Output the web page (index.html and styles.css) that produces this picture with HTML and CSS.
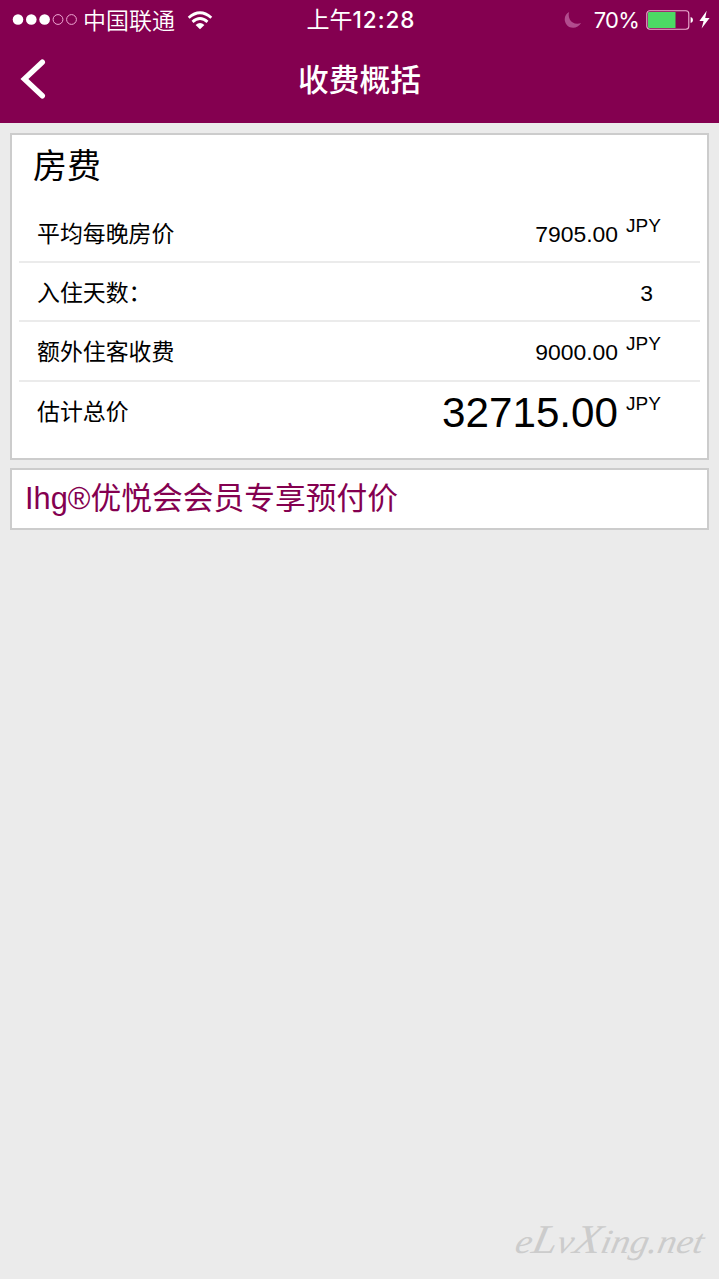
FILE: index.html
```html
<!DOCTYPE html>
<html lang="zh-CN">

<head>
    <meta charset="UTF-8">
    <meta name="viewport" content="width=device-width, initial-scale=1.0">
    <title>收费概括</title>
    <link rel="stylesheet" href="styles.css">
</head>

<body>

    <header class="header">
        <div class="status">
            <div class="status-left">
                <svg class="signal" width="66" height="14" viewBox="0 0 66 14">
                    <g fill="#fff">
                        <circle cx="6" cy="6.5" r="5.3" />
                        <circle cx="19.3" cy="6.5" r="5.3" />
                        <circle cx="32.6" cy="6.5" r="5.3" />
                    </g>
                    <g fill="none" stroke="#f0a8d4" stroke-width="1">
                        <circle cx="46" cy="6.5" r="4.9" />
                        <circle cx="59.5" cy="6.5" r="4.9" />
                    </g>
                </svg>
                <span class="carrier">中国联通</span>
                <svg class="wifi" width="26" height="19" viewBox="0 0 26 19">
                    <g fill="none" stroke="#fff" stroke-width="2.8">
                        <path d="M1.7 6.8 Q13 -3.2 24.3 6.8" />
                        <path d="M5.5 10.9 Q13 4.2 20.5 10.9" />
                    </g>
                    <path d="M8.6 14 Q13 10 17.4 14 L13 18.3 Z" fill="#fff" />
                </svg>
            </div>
            <div class="time">上午<b>12:28</b></div>
            <div class="status-right">
                <svg width="18" height="18" viewBox="0 0 18 18">
                    <path d="M5.2 1 C.8 3.2 -.6 8.8 2.1 12.9 C5.4 18.2 13.6 18.2 17.1 12 C12.4 14 7.6 12 5.7 8.2 C4.5 5.8 4.4 3.3 5.2 1 Z" fill="#b24c8e" />
                </svg>
                <span class="percent">70%</span>
                <svg class="battery" width="48" height="20" viewBox="0 0 48 20">
                    <rect x=".8" y=".8" width="42" height="18.4" rx="3" fill="none" stroke="#eeb0d2" stroke-width="1.1" />
                    <path d="M3 2 H29.5 V18 H3 Q2 18 2 17 V3 Q2 2 3 2 Z" fill="#4cd964" />
                    <path d="M44.6 7 Q47 7.7 47 10 Q47 12.3 44.6 13 Z" fill="#fff" />
                </svg>
                <svg class="bolt" width="11" height="20" viewBox="0 0 11 20">
                    <path d="M7.7 .8 L.4 11 H4.6 L2.6 18.6 L10.6 8 H6.2 Z" fill="#fff" />
                </svg>
            </div>
        </div>
        <nav class="navbar">
            <a class="back" href="#" aria-label="返回">
                <svg width="26" height="42" viewBox="0 0 26 42">
                    <path d="M22.3 4.2 L4.4 21 L22.3 37.8" fill="none" stroke="#fff" stroke-width="5.4" stroke-linecap="round" stroke-linejoin="miter" />
                </svg>
            </a>
            <h1>收费概括</h1>
            <span></span>
        </nav>
    </header>

    <main class="content">
        <section class="card fees">
            <h2>房费</h2>
            <ul>
                <li><span>平均每晚房价</span><span class="price">7905.00</span><span class="unit">JPY</span></li>
                <li><span>入住天数：</span><span class="price nights">3</span></li>
                <li><span>额外住客收费</span><span class="price">9000.00</span><span class="unit">JPY</span></li>
                <li><span>估计总价</span><span class="price total">32715.00</span><span class="unit">JPY</span></li>
            </ul>
        </section>
        <section class="card rate">Ihg®优悦会会员专享预付价</section>
    </main>

    <footer class="watermark">
        <svg width="210" height="70" viewBox="0 0 210 70">
            <text x="14" y="44" textLength="188" lengthAdjust="spacingAndGlyphs" transform="skewX(-12)">e<tspan class="cap">L</tspan>v<tspan class="cap">X</tspan>ing.net</text>
        </svg>
    </footer>

</body>

</html>
```
FILE: styles.css
```css
* {
    box-sizing: border-box;
}

body {
    margin: 0;
    min-height: 1279px;
    display: flex;
    flex-direction: column;
    background: #ebebeb;
    color: #000;
    font-family: "Liberation Sans", "Noto Sans CJK SC", sans-serif;
}

svg {
    display: block;
}

.header {
    height: 123px;
    background: #840050;
    color: #fff;
}

.status {
    display: grid;
    grid-template-columns: 1fr auto 1fr;
    align-items: center;
    height: 39px;
    padding: 0 9px 0 12px;
    line-height: 36px;
    font-size: 23px;
}

.status-left,
.status-right {
    display: flex;
    align-items: center;
}

.status-right {
    justify-content: flex-end;
}

.carrier {
    margin-left: 5px;
    padding-bottom: 3px;
    font-weight: 350;
    font-family: "Noto Sans CJK SC", sans-serif;
}

.wifi {
    margin-left: 12px;
}

.time {
    padding-bottom: 2px;
    font-family: "Noto Sans CJK SC", sans-serif;
}

.time b {
    font-family: Inter, sans-serif;
    font-weight: 500;
    font-size: 22.5px;
    letter-spacing: 1px;
}

.percent {
    margin: 0 7px 0 12px;
    padding-bottom: 1px;
    font-family: Inter, sans-serif;
    font-size: 22px;
    letter-spacing: -0.8px;
}

.bolt {
    margin-left: 5px;
}

.navbar {
    display: grid;
    grid-template-columns: 1fr auto 1fr;
    align-items: center;
    height: 79px;
    padding: 0 20px;
}

.navbar h1 {
    margin: 0;
    padding-top: 4px;
    font-size: 30.7px;
    font-weight: 500;
    line-height: 46px;
}

.content {
    display: flex;
    flex-direction: column;
    gap: 8px;
    padding: 10px 10px 0;
}

.card {
    background: #fff;
    border: 2px solid #ccc;
}

.fees {
    height: 327px;
    padding: 0 7px;
}

.fees h2 {
    margin: 0;
    padding: 6px 0 0 14px;
    height: 68.6px;
    font-size: 34px;
    font-weight: 400;
    line-height: 50px;
}

.fees ul {
    margin: 0;
    padding: 0;
    list-style: none;
}

.fees li {
    display: flex;
    height: 59.4px;
    padding: 0 39px 0 18px;
    border-bottom: 2px solid #ebebeb;
    font-size: 22.9px;
    line-height: 61px;
}

.fees li:last-child {
    border-bottom: 0;
}

.price {
    margin-left: auto;
}

.nights {
    padding-right: 8px;
}

.total {
    font-size: 42.2px;
}

.unit {
    width: 35px;
    margin-left: 8px;
    font-size: 19px;
    line-height: 43px;
}

.rate {
    height: 62px;
    padding-left: 13px;
    color: #840050;
    font-size: 30.75px;
    line-height: 58px;
}

.watermark {
    display: flex;
    justify-content: flex-end;
    margin-top: auto;
}

.watermark text {
    fill: #ccc;
    font-family: "Liberation Serif", serif;
    font-size: 34px;
    font-style: italic;
}

.watermark .cap {
    font-size: 41px;
}
```
